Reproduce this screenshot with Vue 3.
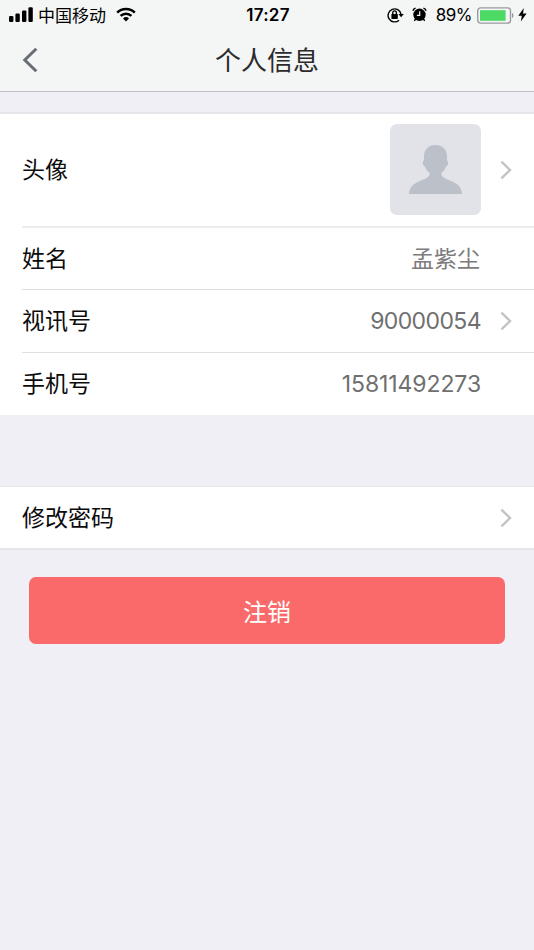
<template>
  <div class="page">
    <header class="header">
      <div class="status-bar">
        <div class="status-left">
          <svg class="signal" width="24" height="15" viewBox="0 0 24 15">
            <rect x="0" y="9" width="4.4" height="6" rx="1.2" />
            <rect x="6.4" y="6.6" width="4.4" height="8.4" rx="1.2" />
            <rect x="13" y="3.4" width="4.400" height="11.6" rx="1.2" />
            <rect x="19.4" y="0.2" width="4.4" height="14.8" rx="1.2" />
          </svg>
          <span class="carrier">中国移动</span>
          <svg class="wifi" width="20" height="15" viewBox="0 0 20 15">
            <path d="M1.2 5.6a12.6 12.6 0 0 1 17.6 0" />
            <path d="M4.6 8.9a7.8 7.8 0 0 1 10.8 0" />
            <path class="dot" d="M10 14.4l-3-3a4.4 4.4 0 0 1 6 0z" />
          </svg>
        </div>
        <span class="time">17:27</span>
        <div class="status-right">
          <svg class="lock" width="17" height="16" viewBox="0 0 17 16">
            <path class="ring" d="M12 13.2A6.5 6.5 0 1 1 14 7.200" />
            <path d="M11.4 6.9h5.4l-2.7 3.4z" />
            <rect x="4.4" y="7" width="6.4" height="4.9" rx="0.6" />
            <path class="ring" d="M5.8 7.2V5.700a1.800 1.800 0 0 1 3.600 0v1.500" />
          </svg>
          <svg class="alarm" width="15" height="15" viewBox="0 0 15 15">
            <circle cx="7.5" cy="7.8" r="6.2" />
            <path class="bell" d="M0.900 3.700a4 4 0 0 1 2.700-2.600M14.100 3.700a4 4 0 0 0-2.700-2.600M3.600 12l-1.300 1.800M11.400 12l1.300 1.800" />
            <path class="hands" d="M7.700 4.200v4.200H4.900" />
          </svg>
          <span class="percent">89%</span>
          <svg class="battery" width="37" height="17" viewBox="0 0 37 17">
            <rect class="shell" x="0.7" y="0.9" width="32.8" height="15.2" rx="2.8" />
            <rect class="level" x="3" y="3.2" width="25.6" height="10.6" />
            <path class="cap" d="M35 6c2 .6 2 4.4 0 5z" />
          </svg>
          <svg class="bolt" width="9" height="14" viewBox="0 0 9 14">
            <path d="M5.8 0L0.3 7.8h3.5L2.8 13.6 8.6 5.5H5z" />
          </svg>
        </div>
      </div>
      <div class="nav-bar">
        <button class="back" aria-label="返回">
          <svg width="16" height="26" viewBox="0 0 16 26">
            <path d="M14.300 1.800L2.800 13l11.500 11.200" />
          </svg>
        </button>
        <h1>个人信息</h1>
      </div>
    </header>

    <main>
      <section class="group profile">
        <div v-for="item in items" :key="item.label" class="row" :class="{ tall: item.avatar }">
          <span class="label">{{ item.label }}</span>
          <div v-if="item.avatar" class="avatar">
            <svg width="53" height="49" viewBox="0 0 53 49">
              <path d="M26.5 0C19.5 0 15 4.6 15 11.5v4c-1.800.400-1.600 5.400 1 6 .8 3 2.700 5 4.700 6.700C20.700 32 17 33.500 11.500 35.700 4 38.500 0 43 0 49h53c0-6-4-10.500-11.500-13.300C36 33.500 32.300 32 32.300 28.200c2-1.700 3.900-3.700 4.700-6.700 2.600-.6 2.800-5.600 1-6v-4C38 4.600 33.500 0 26.500 0z" />
            </svg>
          </div>
          <span v-else class="value" :class="item.type">{{ item.value }}</span>
          <svg v-if="item.link" class="arrow" width="12" height="20" viewBox="0 0 12 20">
            <path d="M1.400 1.600L10 10l-8.600 8.400" />
          </svg>
        </div>
      </section>

      <section class="group password">
        <div class="row">
          <span class="label">修改密码</span>
          <svg class="arrow" width="12" height="20" viewBox="0 0 12 20">
            <path d="M1.400 1.600L10 10l-8.600 8.400" />
          </svg>
        </div>
      </section>

      <button class="logout">注销</button>
    </main>
  </div>
</template>

<script setup>
const items = [
  { label: '头像', avatar: true, link: true },
  { label: '姓名', value: '孟紫尘', type: 'name' },
  { label: '视讯号', value: '90000054', type: 'account', link: true },
  { label: '手机号', value: '15811492273', type: 'phone' }
]
</script>

<style>
body {
  margin: 0;
  background: #f0eff5;
}
</style>

<style scoped>
.page {
  min-height: 950px;
  background: #f0eff5;
  font-family: Inter, 'Noto Sans CJK SC', sans-serif;
  color: #0c0c0c;
}

svg {
  display: block;
  flex-shrink: 0;
}

button {
  border: none;
  padding: 0;
  font-family: inherit;
}

.header {
  box-sizing: border-box;
  height: 92px;
  background: #f4f5f5;
  border-bottom: 1px solid #bfc0c3;
}

.status-bar {
  display: grid;
  grid-template-columns: 1fr auto 1fr;
  align-items: center;
  height: 30px;
  padding: 0 7px 0 9px;
  color: #000;
  font-size: 17px;
  line-height: 30px;
}

.status-left,
.status-right {
  display: flex;
  align-items: center;
  height: 30px;
}

.status-right {
  justify-content: flex-end;
}

.signal {
  margin-top: -1px;
}

.carrier {
  margin: 0 10px 0 5px;
  padding-top: 1px;
}

.wifi {
  margin-top: -1px;
}

.wifi path {
  fill: none;
  stroke: #000;
  stroke-width: 2.6;
}

.wifi .dot {
  fill: #000;
  stroke: none;
}

.time {
  font-weight: 600;
  font-size: 17px;
  letter-spacing: 0.3px;
}

.lock,
.alarm {
  margin-top: -1px;
}

.ring,
.bell {
  fill: none;
  stroke: #000;
  stroke-width: 1.4;
}

.alarm {
  margin-left: 8px;
  margin-right: 9px;
}

.hands {
  fill: none;
  stroke: #f4f5f5;
  stroke-width: 1.2;
}

.percent {
  letter-spacing: -0.5px;
}

.battery {
  margin: 0 4px 0 5px;
}

.shell {
  fill: none;
  stroke: #9a9b9d;
  stroke-width: 1.4;
}

.level {
  fill: #4cd964;
}

.cap {
  fill: #9a9b9d;
}

.nav-bar {
  display: grid;
  grid-template-columns: 60px 1fr 60px;
  align-items: center;
  height: 60px;
}

.back {
  justify-self: start;
  margin-left: 22px;
  background: none;
}

.back path {
  fill: none;
  stroke: #676d75;
  stroke-width: 3;
}

h1 {
  margin: 0;
  padding-top: 2px;
  color: #2b2b2b;
  font-size: 26px;
  font-weight: 400;
  line-height: 58px;
  text-align: center;
}

.group {
  background: #fff;
  border-top: 2px solid #e6e6ea;
}

.profile {
  margin-top: 20px;
}

.row {
  display: flex;
  align-items: center;
  box-sizing: border-box;
  height: 61px;
  margin-left: 22px;
  padding-right: 22px;
}

.profile .row {
  height: 63px;
  padding-bottom: 1px;
}

.profile .row.tall {
  height: 112px;
  padding-bottom: 1px;
}

.profile .row + .row {
  border-top: 1px solid #dfdfe1;
}

.profile .row.tall + .row {
  border-top: 2px solid #ececec;
}

.label {
  padding-top: 1px;
  font-size: 23px;
  line-height: 34px;
}

.value {
  margin-left: auto;
  margin-right: 31px;
  color: #6f6f70;
  font-size: 23px;
  line-height: 34px;
}

.value.name {
  margin-right: 32px;
  padding-top: 1px;
  color: #7c7c7d;
}

.value.account {
  letter-spacing: -0.6px;
}

.value.phone {
  letter-spacing: -0.1px;
}

.arrow {
  margin-left: auto;
}

.avatar {
  display: flex;
  justify-content: center;
  align-items: center;
  width: 91px;
  height: 91px;
  margin-left: auto;
  margin-right: 31px;
  background: #e1e3e8;
  border-radius: 7px;
}

.avatar path {
  fill: #bcc0c8;
}

.value + .arrow,
.avatar + .arrow {
  margin-left: -12px;
}

.arrow path {
  fill: none;
  stroke: #c3c3c8;
  stroke-width: 2.4;
}

.password {
  margin-top: 71px;
  border-top-width: 1px;
  border-bottom: 2px solid #e6e6ea;
}

.logout {
  display: block;
  width: 476px;
  height: 67px;
  margin: 27px auto 0;
  background: #fa6a6a;
  border-radius: 7px;
  color: #fff;
  font-size: 24px;
}
</style>
